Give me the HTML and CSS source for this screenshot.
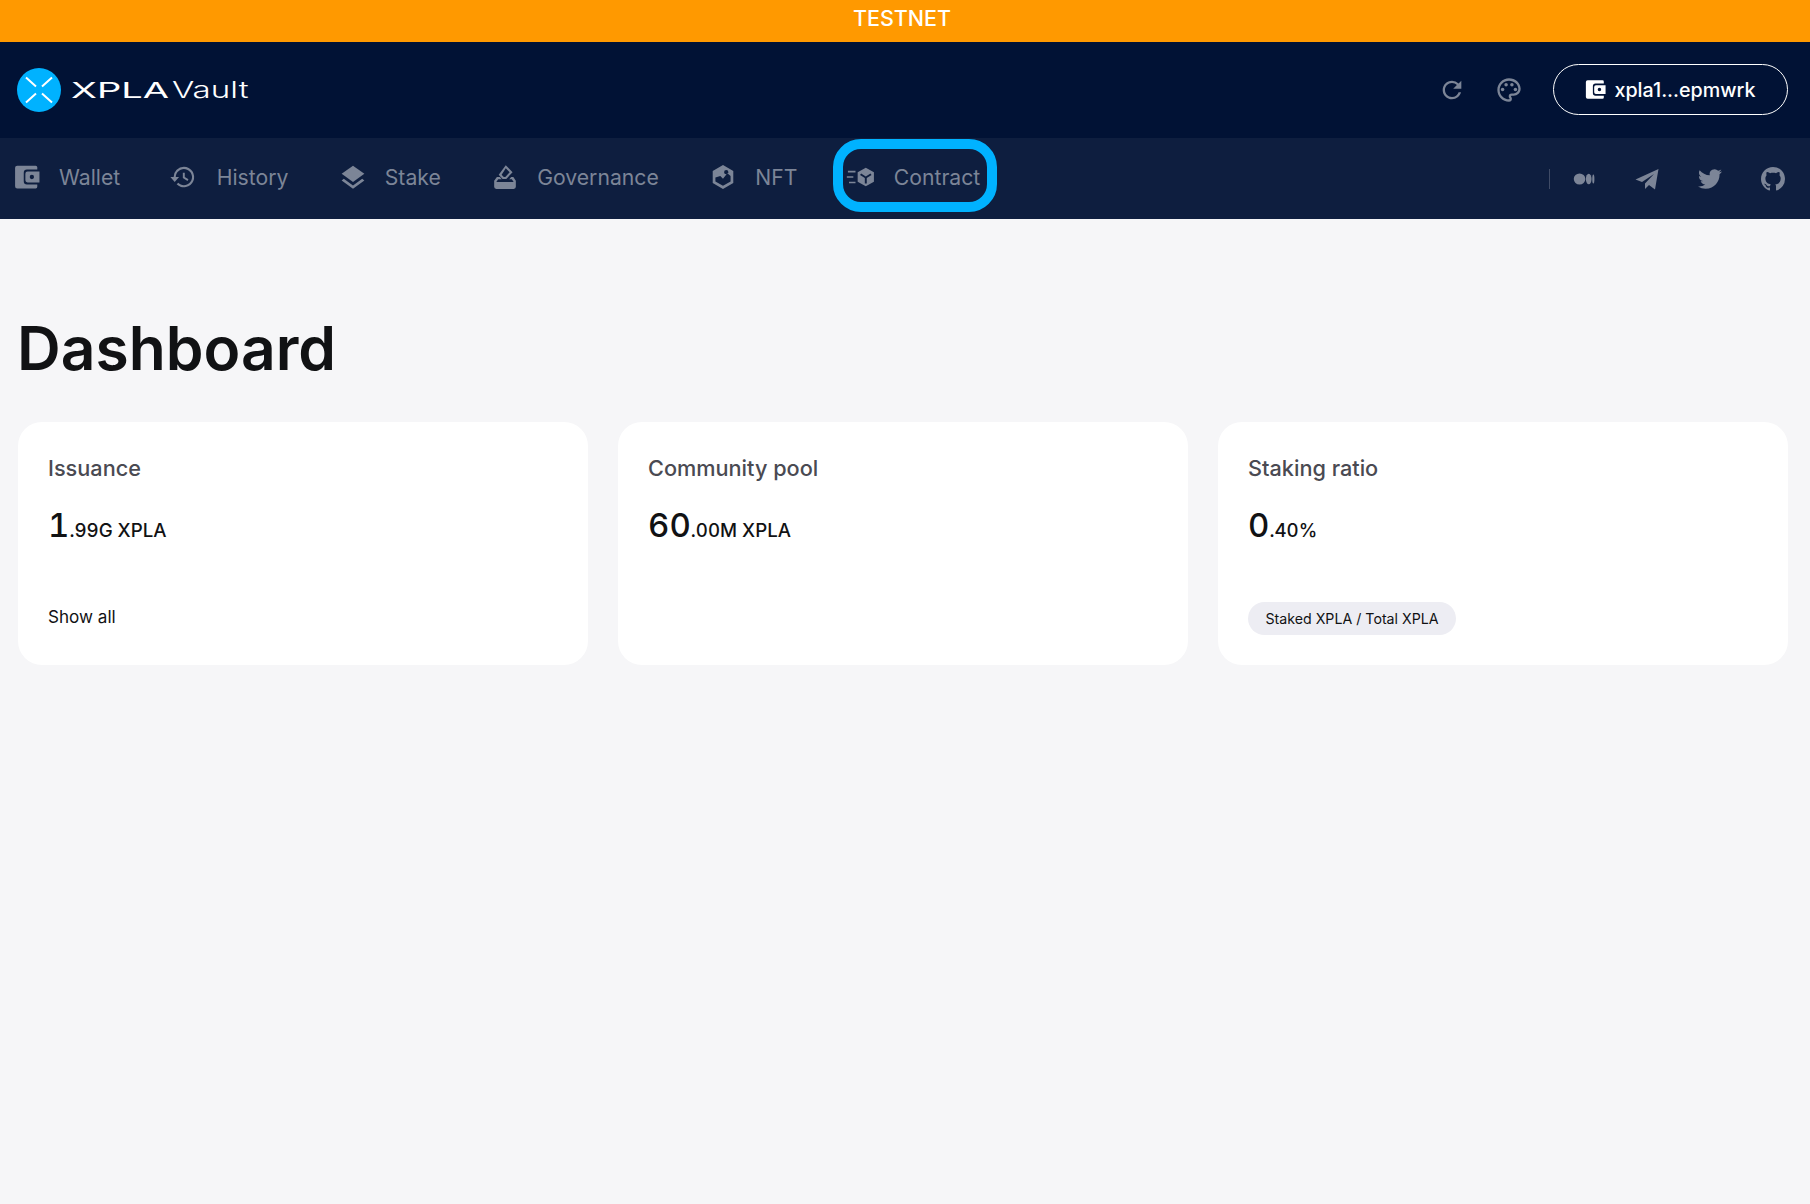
FILE: index.html
```html
<!DOCTYPE html>
<html>
<head>
	<meta charset="UTF-8">
	<title>XPLA Vault</title>
	<link rel="stylesheet" href="styles.css">
</head>
<body>
	<div class="banner">TESTNET</div>

	<header class="topbar">
		<div class="logo">
			<svg class="logo-mark" viewBox="0 0 44 44">
				<circle cx="22" cy="22" r="22" fill="#00b2ff"/>
				<path d="M9 9.5l10 9M35 9.5l-10 9M9 34.5l10-9M35 34.5l-10-9" stroke="#fff" stroke-width="2" fill="none"/>
			</svg>
			<span class="logo-xpla">XPLA</span>
			<span class="logo-vault">Vault</span>
		</div>
		<div class="topbar-right">
			<svg class="top-icon" viewBox="0 0 24 24"><path d="M17.65 6.35A7.958 7.958 0 0 0 12 4c-4.42 0-7.99 3.58-7.99 8s3.57 8 7.99 8c3.73 0 6.84-2.55 7.73-6h-2.08A5.99 5.99 0 0 1 12 18c-3.31 0-6-2.69-6-6s2.69-6 6-6c1.66 0 3.14.69 4.22 1.78L13 11h7V4l-2.35 2.35z"/></svg>
			<svg class="top-icon" viewBox="0 0 24 24"><path d="M12 22C6.49 22 2 17.51 2 12S6.49 2 12 2s10 4.04 10 9c0 3.31-2.69 6-6 6h-1.77c-.28 0-.5.22-.5.5 0 .12.05.23.13.33.41.47.64 1.06.64 1.67A2.5 2.5 0 0 1 12 22zm0-18c-4.41 0-8 3.59-8 8s3.59 8 8 8c.28 0 .5-.22.5-.5a.54.54 0 0 0-.14-.35c-.41-.46-.63-1.05-.63-1.65a2.5 2.5 0 0 1 2.5-2.5H16c2.21 0 4-1.79 4-4 0-3.86-3.59-7-8-7z"/><circle cx="6.5" cy="11.5" r="1.5"/><circle cx="9.5" cy="7.5" r="1.5"/><circle cx="14.5" cy="7.5" r="1.5"/><circle cx="17.5" cy="11.5" r="1.5"/></svg>
			<button class="wallet-btn">
				<svg class="wallet-btn-icon" viewBox="0 0 24 24"><path fill-rule="evenodd" d="M3 1.500H20A1.500 1.500 0 0 1 21.500 3V5H12A3 3 0 0 0 9 8V16A3 3 0 0 0 12 19H21.500V21A1.500 1.500 0 0 1 20 22.500H3A2 2 0 0 1 1 20.500V3.500A2 2 0 0 1 3 1.500zM12.500 7H23.500V17H12.500A2 2 0 0 1 10.500 15V9A2 2 0 0 1 12.500 7zM16.500 10a2 2 0 1 0 0 4 2 2 0 0 0 0-4z"/></svg>
				xpla1...epmwrk
			</button>
		</div>
	</header>

	<nav class="navbar">
		<div class="nav-links">
			<a class="nav-item">
				<svg class="nav-icon" viewBox="0 0 24 24"><path fill-rule="evenodd" d="M3 1.500H20A1.500 1.500 0 0 1 21.500 3V5H12A3 3 0 0 0 9 8V16A3 3 0 0 0 12 19H21.500V21A1.500 1.500 0 0 1 20 22.500H3A2 2 0 0 1 1 20.500V3.500A2 2 0 0 1 3 1.500zM12.500 7H23.500V17H12.500A2 2 0 0 1 10.500 15V9A2 2 0 0 1 12.500 7zM16.500 10a2 2 0 1 0 0 4 2 2 0 0 0 0-4z"/></svg>
				Wallet
			</a>
			<a class="nav-item">
				<svg class="nav-icon nav-icon-wide" viewBox="2 0 24 24"><path d="M13 2.500a9.500 9.500 0 0 0-9.500 9.500H.5l4 4.500 4-4.500h-3c0-4.100 3.400-7.500 7.500-7.500s7.500 3.400 7.500 7.500-3.400 7.500-7.500 7.500c-2 0-3.900-.8-5.200-2.200l-1.500 1.500A9.500 9.500 0 1 0 13 2.500zM12 8v5l4.300 2.600.9-1.500-3.400-2V8z"/></svg>
				History
			</a>
			<a class="nav-item">
				<svg class="nav-icon" viewBox="0 0 24 24"><path d="M12 1.500L22.500 9 12 16.500 1.500 9z"/><path d="M3.500 13.700L12 19.800l8.500-6.100 2 1.500L12 22.800 1.500 15.200z"/></svg>
				Stake
			</a>
			<a class="nav-item">
				<svg class="nav-icon" viewBox="0 0 24 24"><path fill-rule="evenodd" d="M12.700 1.200l6.300 6.300-5.800 6.300H9.800L6.200 9.900zM12.700 3.900L8.900 9.900l2 2h1.400l4-4.300z"/><path d="M4.500 12h2.700l1.800 2H5.700L4 16.500h16L18.300 14h-2.400l1.800-2h2l2.300 3.500V21a2 2 0 0 1-2 2H4a2 2 0 0 1-2-2v-5.500z"/></svg>
				Governance
			</a>
			<a class="nav-item">
				<svg class="nav-icon" viewBox="0 0 24 24"><path fill-rule="evenodd" d="M12 1l9.500 5.500v11L12 23l-9.500-5.500v-11zM5 12.500v3.600l7 4 7-4V11l-3-2.500-4 5-2.500-2.500zM15 5.500a2 2 0 1 0 0 4 2 2 0 0 0 0-4z"/></svg>
				NFT
			</a>
			<a class="nav-item nav-item-marked">
				<svg class="nav-icon nav-icon-wide" viewBox="0 0 24 24"><path fill-rule="evenodd" d="M15.500 3.500L23 7.700V16.300L15.500 20.500 8 16.300V7.700zM11.200 8.800L10.200 10.200 14.600 13V18H16.400V13L20.800 10.200 19.800 8.800 15.500 11.500z"/><path d="M-1 6.300H6V7.800H-1zM-2 11.300H4V12.800H-2zM0 16.300H6V17.800H0z"/></svg>
				Contract
			</a>
		</div>
		<div class="nav-social">
			<span class="nav-divider"></span>
			<svg class="social-icon" viewBox="-1.500 -1.500 27 27"><ellipse cx="7" cy="12" rx="6.500" ry="6.200"/><ellipse cx="17.300" cy="12" rx="3.200" ry="5.800"/><ellipse cx="22.500" cy="12" rx="1.200" ry="5.200"/></svg>
			<svg class="social-icon" viewBox="0 0 24 24"><path d="M23.500 2L.5 12.500l6.500 2.500L19 7l-9 9.500V22l4-4 6 4.500z"/></svg>
			<svg class="social-icon" viewBox="0 0 24 24"><path d="M23.953 4.570a10 10 0 0 1-2.825.775 4.958 4.958 0 0 0 2.163-2.723c-.951.555-2.005.959-3.127 1.184a4.920 4.920 0 0 0-8.384 4.482C7.690 8.095 4.067 6.130 1.640 3.162a4.822 4.822 0 0 0-.666 2.475c0 1.710.870 3.213 2.188 4.096a4.904 4.904 0 0 1-2.228-.616v.060a4.923 4.923 0 0 0 3.946 4.827 4.996 4.996 0 0 1-2.212.085 4.936 4.936 0 0 0 4.604 3.417 9.867 9.867 0 0 1-6.102 2.105c-.390 0-.779-.023-1.170-.067a13.995 13.995 0 0 0 7.557 2.209c9.053 0 13.998-7.496 13.998-13.985 0-.210 0-.420-.015-.630A9.935 9.935 0 0 0 24 4.590z"/></svg>
			<svg class="social-icon" viewBox="0 0 16 16"><path d="M8 0C3.580 0 0 3.580 0 8c0 3.540 2.290 6.530 5.470 7.590.4.070.55-.17.55-.38 0-.19-.01-.82-.01-1.490-2.010.37-2.530-.49-2.690-.94-.09-.23-.48-.94-.82-1.130-.28-.15-.68-.52-.01-.53.63-.01 1.080.58 1.230.82.72 1.210 1.870.87 2.330.66.070-.52.280-.87.510-1.070-1.780-.2-3.640-.89-3.640-3.950 0-.87.310-1.590.820-2.150-.08-.2-.36-1.020.08-2.120 0 0 .67-.21 2.200.82.640-.18 1.320-.27 2-.27.680 0 1.360.090 2 .27 1.530-1.040 2.200-.82 2.200-.82.440 1.100.160 1.920.080 2.120.510.560.820 1.270.820 2.150 0 3.070-1.870 3.750-3.650 3.950.290.250.540.730.540 1.480 0 1.070-.01 1.930-.01 2.200 0 .210.150.460.550.380A8.013 8.013 0 0 0 16 8c0-4.420-3.580-8-8-8z"/></svg>
		</div>
	</nav>

	<main class="content">
		<h1 class="page-title">Dashboard</h1>

		<div class="cards">
			<section class="card">
				<h2 class="card-title">Issuance</h2>
				<div class="card-value">1<small>.99G XPLA</small></div>
				<a class="card-link">Show all</a>
			</section>
			<section class="card">
				<h2 class="card-title">Community pool</h2>
				<div class="card-value">60<small>.00M XPLA</small></div>
			</section>
			<section class="card">
				<h2 class="card-title">Staking ratio</h2>
				<div class="card-value">0<small>.40%</small></div>
				<span class="card-pill">Staked XPLA / Total XPLA</span>
			</section>
		</div>
	</main>
</body>
</html>
```

FILE: styles.css
```css
* {
	box-sizing: border-box;
}

body {
	margin: 0;
	min-height: 1204px;
	background-color: #f6f6f8;
	font-family: Inter, "Liberation Sans", sans-serif;
	color: #111214;
}

.banner {
	height: 42px;
	padding-right: 6px;
	background-color: #ff9900;
	color: #fff;
	font-size: 21.500px;
	font-weight: 500;
	line-height: 37px;
	text-align: center;
}

.topbar {
	display: flex;
	align-items: center;
	justify-content: space-between;
	height: 96px;
	padding: 0 22px 0 17px;
	background-color: #011235;
}

.logo {
	display: flex;
	align-items: center;
	color: #fff;
}

.logo-mark {
	width: 44px;
	height: 44px;
	margin-right: 10px;
}

.logo-xpla {
	width: 101px;
	font-size: 22px;
	font-weight: 400;
	line-height: 1;
	transform: scaleX(1.73);
	transform-origin: left center;
}

.logo-vault {
	font-size: 23px;
	font-weight: 300;
	line-height: 1;
	transform: scaleX(1.44);
	transform-origin: left center;
}

.topbar-right {
	display: flex;
	align-items: center;
}

.top-icon {
	width: 28px;
	height: 28px;
	margin-right: 29px;
	fill: #7c8597;
}

.wallet-btn {
	display: flex;
	align-items: center;
	justify-content: center;
	gap: 8px;
	width: 235px;
	height: 51px;
	margin: -1px 0 0 1px;
	border: 1px solid #fff;
	border-radius: 26px;
	background: none;
	color: #fff;
	font-family: inherit;
	font-size: 19.700px;
	font-weight: 500;
}

.wallet-btn-icon {
	width: 21px;
	height: 21px;
	fill: #fff;
}

.navbar {
	display: flex;
	align-items: center;
	justify-content: space-between;
	height: 81px;
	padding: 0 25px 3px 14px;
	background-color: #0e1e3f;
}

.nav-links {
	display: flex;
	align-items: center;
	gap: 51.400px;
}

.nav-item {
	position: relative;
	display: flex;
	align-items: center;
	gap: 19px;
	color: #7c8597;
	font-size: 21.200px;
}

.nav-icon {
	width: 26px;
	height: 26px;
	fill: #7c8597;
}

.nav-icon-wide {
	overflow: visible;
}

/* the highlight round the Contract link */
.nav-item-marked::after {
	content: "";
	position: absolute;
	top: -25px;
	right: -16.500px;
	bottom: -22px;
	left: -16px;
	border: 10px solid #00b2ff;
	border-radius: 28px;
}

.nav-social {
	display: flex;
	align-items: center;
	gap: 39px;
	margin-top: 3px;
}

.nav-divider {
	width: 1px;
	height: 20px;
	margin-right: -17px;
	background-color: #3f4b66;
}

.social-icon {
	width: 24px;
	height: 24px;
	fill: #7c8597;
}

.content {
	padding: 0 22px 0 18px;
}

.page-title {
	margin: 0 0 0 -1px;
	padding-top: 93px;
	font-size: 60.500px;
	font-weight: 600;
	line-height: 72px;
}

.cards {
	display: grid;
	grid-template-columns: repeat(3, 1fr);
	gap: 30px;
	margin-top: 38px;
}

.card {
	display: flex;
	flex-direction: column;
	align-items: flex-start;
	height: 243px;
	padding: 30px;
	border-radius: 24px;
	background-color: #fff;
}

.card-title {
	margin: 0;
	color: #4a4a52;
	font-size: 21.700px;
	font-weight: 500;
	line-height: 32px;
}

.card-value {
	margin-top: 19px;
	font-size: 33px;
	font-weight: 500;
	font-variant-numeric: tabular-nums;
	line-height: 44px;
}

.card-value small {
	font-size: 18.700px;
	font-weight: 500;
}

.card-link {
	margin-top: auto;
	margin-bottom: 6px;
	font-size: 17.100px;
	line-height: 24px;
}

.card-pill {
	margin-top: auto;
	padding: 0 17.500px;
	border-radius: 17px;
	background-color: #ededf3;
	font-size: 14.200px;
	line-height: 33px;
}
```
